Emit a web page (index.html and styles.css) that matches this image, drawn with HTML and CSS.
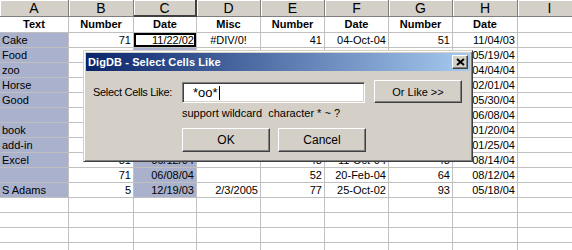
FILE: index.html
```html
<!DOCTYPE html>
<html lang="en">
<head>
    <title>DigDB - Select Cells Like</title>
    <meta charset="utf-8">
    <link rel="stylesheet" href="styles.css">
</head>
<body>
    <div class="sheet">
        <div class="hd">A</div><div class="hd">B</div><div class="hd hd-sel">C</div><div class="hd">D</div><div class="hd">E</div><div class="hd">F</div><div class="hd">G</div><div class="hd">H</div><div class="hd">I</div>

        <div class="c b ctr first">Text</div><div class="c b ctr first">Number</div><div class="c b ctr first">Date</div><div class="c b ctr first">Misc</div><div class="c b ctr first">Number</div><div class="c b ctr first">Date</div><div class="c b ctr first">Number</div><div class="c b ctr first">Date</div><div class="c first"></div>

        <div class="c sel">Cake</div><div class="c n">71</div><div class="c n active">11/22/02</div><div class="c ctr">#DIV/0!</div><div class="c n">41</div><div class="c n">04-Oct-04</div><div class="c n">51</div><div class="c n">11/04/03</div><div class="c"></div>
        <div class="c sel">Food</div><div class="c"></div><div class="c sel"></div><div class="c"></div><div class="c"></div><div class="c"></div><div class="c"></div><div class="c n">05/19/04</div><div class="c"></div>
        <div class="c sel">zoo</div><div class="c"></div><div class="c sel"></div><div class="c"></div><div class="c"></div><div class="c"></div><div class="c"></div><div class="c n">04/04/04</div><div class="c"></div>
        <div class="c sel">Horse</div><div class="c"></div><div class="c sel"></div><div class="c"></div><div class="c"></div><div class="c"></div><div class="c"></div><div class="c n">02/01/04</div><div class="c"></div>
        <div class="c sel">Good</div><div class="c"></div><div class="c sel"></div><div class="c"></div><div class="c"></div><div class="c"></div><div class="c"></div><div class="c n">05/30/04</div><div class="c"></div>
        <div class="c sel"></div><div class="c"></div><div class="c sel"></div><div class="c"></div><div class="c"></div><div class="c"></div><div class="c"></div><div class="c n">06/08/04</div><div class="c"></div>
        <div class="c sel">book</div><div class="c"></div><div class="c sel"></div><div class="c"></div><div class="c"></div><div class="c"></div><div class="c"></div><div class="c n">01/20/04</div><div class="c"></div>
        <div class="c sel">add-in</div><div class="c"></div><div class="c sel"></div><div class="c"></div><div class="c"></div><div class="c"></div><div class="c"></div><div class="c n">01/25/04</div><div class="c"></div>
        <div class="c sel">Excel</div><div class="c n">81</div><div class="c n sel">06/12/04</div><div class="c"></div><div class="c n">48</div><div class="c n">11-Oct-04</div><div class="c n">48</div><div class="c n">08/14/04</div><div class="c"></div>
        <div class="c sel"></div><div class="c n">71</div><div class="c n sel">06/08/04</div><div class="c"></div><div class="c n">52</div><div class="c n">20-Feb-04</div><div class="c n">64</div><div class="c n">08/12/04</div><div class="c"></div>
        <div class="c sel">S Adams</div><div class="c n">5</div><div class="c n sel">12/19/03</div><div class="c n">2/3/2005</div><div class="c n">77</div><div class="c n">25-Oct-02</div><div class="c n">93</div><div class="c n">05/18/04</div><div class="c"></div>

        <div class="c"></div><div class="c"></div><div class="c"></div><div class="c"></div><div class="c"></div><div class="c"></div><div class="c"></div><div class="c"></div><div class="c"></div>
        <div class="c"></div><div class="c"></div><div class="c"></div><div class="c"></div><div class="c"></div><div class="c"></div><div class="c"></div><div class="c"></div><div class="c"></div>
        <div class="c"></div><div class="c"></div><div class="c"></div><div class="c"></div><div class="c"></div><div class="c"></div><div class="c"></div><div class="c"></div><div class="c"></div>
        <div class="c"></div><div class="c"></div><div class="c"></div><div class="c"></div><div class="c"></div><div class="c"></div><div class="c"></div><div class="c"></div><div class="c"></div>
    </div>

    <div class="dialog">
        <div class="titlebar">
            <span class="title">DigDB - Select Cells Like</span>
            <button class="close">
                <svg width="9" height="8" viewBox="0 0 9 8"><path d="M1 1 L8 7 M8 1 L1 7" stroke="#000" stroke-width="2" fill="none"/></svg>
            </button>
        </div>
        <div class="dlg-body">
            <div class="row">
                <label class="lbl">Select Cells Like:</label>
                <div class="field">*oo*<span class="caret"></span></div>
                <button class="btn btn-small">Or Like &gt;&gt;</button>
            </div>
            <div class="row">
                <span class="spacer"></span>
                <span class="hint">support wildcard&nbsp; character * ~ ?</span>
            </div>
            <div class="row actions">
                <span class="spacer"></span>
                <button class="btn">OK</button>
                <button class="btn">Cancel</button>
            </div>
        </div>
    </div>
</body>
</html>
```

FILE: styles.css
```css
body {
    margin: 0;
    background-color: #fff;
    font-family: "Liberation Sans", Arial, sans-serif;
    overflow: hidden;
}
.sheet {
    display: grid;
    grid-template-columns: 69px 65px 63px 64px 64px 64px 64px 65px 64px;
    grid-template-rows: 17px 16px;
    grid-auto-rows: 15px;
    width: 572px;
    overflow: hidden;
}
.hd {
    box-sizing: border-box;
    background-color: #d4d0c8;
    border-right: 1px solid #808080;
    border-bottom: 1px solid #808080;
    box-shadow: inset 1px 1px 0 #fff;
    text-align: center;
    font-size: 14px;
    line-height: 16px;
    color: #000;
}
.hd-sel {
    border-right: 2px solid #404040;
    border-bottom: 2px solid #404040;
}
.c {
    box-sizing: border-box;
    border-right: 1px solid #c0c0c0;
    border-bottom: 1px solid #c0c0c0;
    font-size: 11px;
    line-height: 14px;
    padding: 0 2px;
    white-space: nowrap;
    overflow: hidden;
    color: #000;
}
.first {
    line-height: 15px;
}
.b {
    font-weight: bold;
}
.ctr {
    text-align: center;
}
.n {
    text-align: right;
}
.sel {
    background-color: #a9b1cc;
}
.active {
    box-shadow: inset 0 0 0 2px #000;
}

/* dialog */
.dialog {
    position: absolute;
    left: 83px;
    top: 50px;
    width: 390px;
    height: 112px;
    box-sizing: border-box;
    background-color: #d4d0c8;
    border: 1px solid;
    border-color: #d4d0c8 #404040 #404040 #d4d0c8;
    box-shadow: inset 1px 1px 0 #fff, inset -1px -1px 0 #808080;
    padding: 2px;
    font-family: "Liberation Sans", Tahoma, sans-serif;
    font-size: 11px;
    color: #000;
}
.titlebar {
    display: flex;
    align-items: center;
    justify-content: space-between;
    height: 18px;
    padding: 0 2px;
    background: linear-gradient(to right, #0a246a, #a6caf0);
}
.title {
    color: #fff;
    font-weight: bold;
    font-size: 11px;
    letter-spacing: 0.1px;
}
.close {
    box-sizing: border-box;
    width: 16px;
    height: 14px;
    padding: 0;
    display: flex;
    align-items: center;
    justify-content: center;
    background-color: #d4d0c8;
    border: 1px solid;
    border-color: #fff #404040 #404040 #fff;
    box-shadow: inset -1px -1px 0 #808080;
}
.dlg-body {
    padding: 9px 0 0 7px;
}
.row {
    display: flex;
    align-items: flex-end;
}
.spacer {
    flex: none;
    width: 89px;
}
.lbl {
    flex: none;
    width: 89px;
    line-height: 21px;
    white-space: nowrap;
    letter-spacing: -0.3px;
}
.field {
    box-sizing: border-box;
    flex: none;
    width: 183px;
    height: 21px;
    margin-right: 9px;
    background-color: #fff;
    border: 1px solid;
    border-color: #808080 #fff #fff #808080;
    box-shadow: inset 1px 1px 0 #404040, inset -1px -1px 0 #d4d0c8;
    padding-left: 10px;
    line-height: 19px;
    font-size: 13px;
}
.caret {
    display: inline-block;
    width: 1px;
    height: 14px;
    margin-left: 1px;
    background-color: #000;
    vertical-align: -3px;
}
.btn {
    box-sizing: border-box;
    flex: none;
    width: 88px;
    height: 24px;
    padding: 0;
    background-color: #d4d0c8;
    border: 1px solid;
    border-color: #fff #404040 #404040 #fff;
    box-shadow: inset -1px -1px 0 #808080, inset 1px 1px 0 #d4d0c8;
    font-family: "Liberation Sans", Tahoma, sans-serif;
    font-size: 12px;
    color: #000;
}
.btn-small {
    height: 23px;
    font-size: 11px;
}
.hint {
    margin-top: 3px;
    line-height: 14px;
    white-space: nowrap;
}
.actions {
    gap: 8px;
    margin-top: 8px;
}
.actions .spacer {
    margin-right: -8px;
}
```
